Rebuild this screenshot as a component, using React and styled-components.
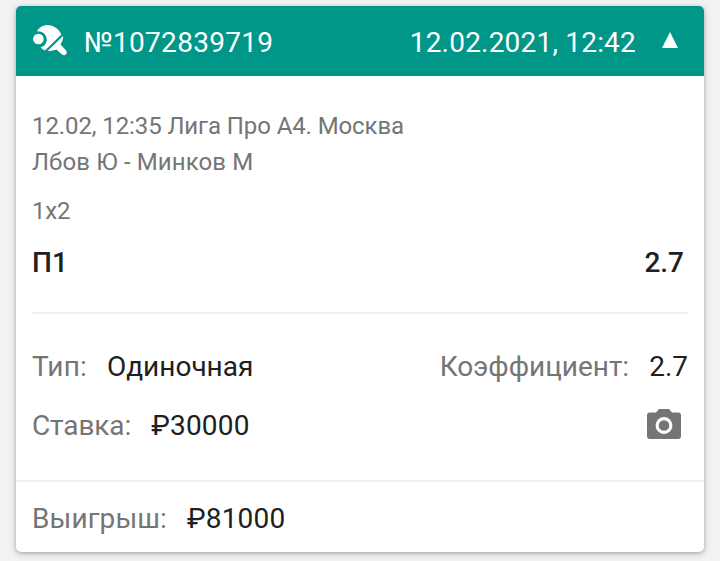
import React from "react";
import styled, { createGlobalStyle } from "styled-components";

const Global = createGlobalStyle`
  * { box-sizing: border-box; }
  body { margin: 0; background: #f1f2f4; font-family: Roboto, "Noto Sans", sans-serif; }
`;
const Page = styled.main`
  height: 561px;
  padding: 6px 16px 9px;
  overflow: hidden;
`;
const Card = styled.article`
  height: 546px;
  background: #fff;
  border-radius: 5px;
  box-shadow: 0 1px 4px rgba(0, 0, 0, 0.3), 0 3px 8px rgba(0, 0, 0, 0.08);
  overflow: hidden;
`;
const Header = styled.header`
  height: 70px;
  padding: 2px 26px 0 16px;
  display: flex;
  align-items: center;
  background: #009788;
  color: #fff;
  font-size: 28px;
`;
const Sport = styled.svg`
  width: 36px;
  height: 36px;
  margin: -2px 16px 0 0;
  flex: none;
`;
const Ticket = styled.span`
  letter-spacing: 0.28px;
`;
const DateTime = styled.time`
  margin-left: auto;
  margin-right: 26px;
  letter-spacing: 0.2px;
`;
const Arrow = styled.svg`
  width: 16px;
  height: 16px;
  margin-top: -4px;
`;
const Event = styled.section`
  height: 236px;
  margin: 0 16px;
  padding-top: 32px;
  color: #757575;
  font-size: 24px;
  line-height: 36px;
`;
const League = styled.div`
  letter-spacing: -0.1px;
`;
const Players = styled.div`
  letter-spacing: 0.12px;
`;
const Market = styled.div`
  margin-top: 13px;
  letter-spacing: -0.2px;
`;
const Pick = styled.div`
  display: flex;
  justify-content: space-between;
  margin-top: 16px;
  padding-right: 4px;
  color: #202020;
  font-size: 28px;
  font-weight: 500;
`;
const Details = styled.section`
  height: 168px;
  margin: 0 16px;
  padding-top: 23px;
  border-top: 2px solid #f2f2f2;
`;
const Row = styled.div`
  display: flex;
  align-items: center;
  justify-content: space-between;
  height: 59px;
`;
const Field = styled.div`
  display: flex;
  gap: 20px;
  font-size: 28px;
  color: #757575;
`;
const Label = styled.span`
  letter-spacing: ${(p) => p.$spacing || "0"};
`;
const Value = styled.span`
  color: #202020;
  letter-spacing: ${(p) => p.$spacing || "0"};
`;
const Camera = styled.svg`
  width: 34px;
  height: 30px;
  margin: -3px 7px 0 0;
`;
const Footer = styled.footer`
  height: 72px;
  padding: 2px 16px 0;
  display: flex;
  align-items: center;
  border-top: 2px solid #f2f2f2;
`;

function LabeledField({ label, value, labelSpacing, spacing }) {
  return (
    <Field>
      <Label $spacing={labelSpacing}>{label}:</Label>
      <Value $spacing={spacing}>{value}</Value>
    </Field>
  );
}

export default function App() {
  return (
    <>
      <Global />
      <Page>
        <Card>
          <Header>
            <Sport viewBox="0 0 36 36" fill="#fff">
              <circle cx="6.4" cy="16" r="5.3" />
              <path d="M4.800 8.200C7 4.400 11 1.900 15.700 1.900c5.800 0 11.600 4.300 13.700 9.600L13 27.400c-1.800-.6-3.300-1.600-4.300-3.100 4-1 6.300-4.400 6-8.300-.3-4.700-4.300-8.200-9.900-7.800z" />
              <path d="M31 12.900c.6 2.300-.7 5.800-2.600 8.400l5.600 6.300c1 1.200 1 2.600 0 3.700-1.100 1.200-2.600 1.300-3.900.2l-5.700-4.900c-2.800 1.200-5.800 1.700-8.800 1.300z" />
            </Sport>
            <Ticket>№1072839719</Ticket>
            <DateTime>12.02.2021, 12:42</DateTime>
            <Arrow viewBox="0 0 16 16"><path d="M8 0 16 16H0z" fill="#fff" /></Arrow>
          </Header>
          <Event>
            <League>12.02, 12:35 Лига Про А4. Москва</League>
            <Players>Лбов Ю - Минков М</Players>
            <Market>1x2</Market>
            <Pick><span>П1</span><span>2.7</span></Pick>
          </Event>
          <Details>
            <Row>
              <LabeledField label="Тип" value="Одиночная" labelSpacing="0.15px" />
              <LabeledField label="Коэффициент" value="2.7" />
            </Row>
            <Row>
              <LabeledField label="Ставка" value="₽30000" labelSpacing="-0.1px" spacing="0.2px" />
              <Camera viewBox="0 0 34 30">
                <path fill="#757575" fillRule="evenodd" d="M12 0h10l3 3.500h6a3 3 0 0 1 3 3V27a3 3 0 0 1-3 3H3a3 3 0 0 1-3-3V6.500a3 3 0 0 1 3-3h6zM17 8.100a8.400 8.400 0 1 0 0 16.800 8.400 8.400 0 0 0 0-16.800zm0 3.100a5.300 5.300 0 1 1 0 10.600 5.300 5.300 0 0 1 0-10.600z" />
              </Camera>
            </Row>
          </Details>
          <Footer><LabeledField label="Выигрыш" value="₽81000" labelSpacing="0.12px" spacing="0.2px" /></Footer>
        </Card>
      </Page>
    </>
  );
}
